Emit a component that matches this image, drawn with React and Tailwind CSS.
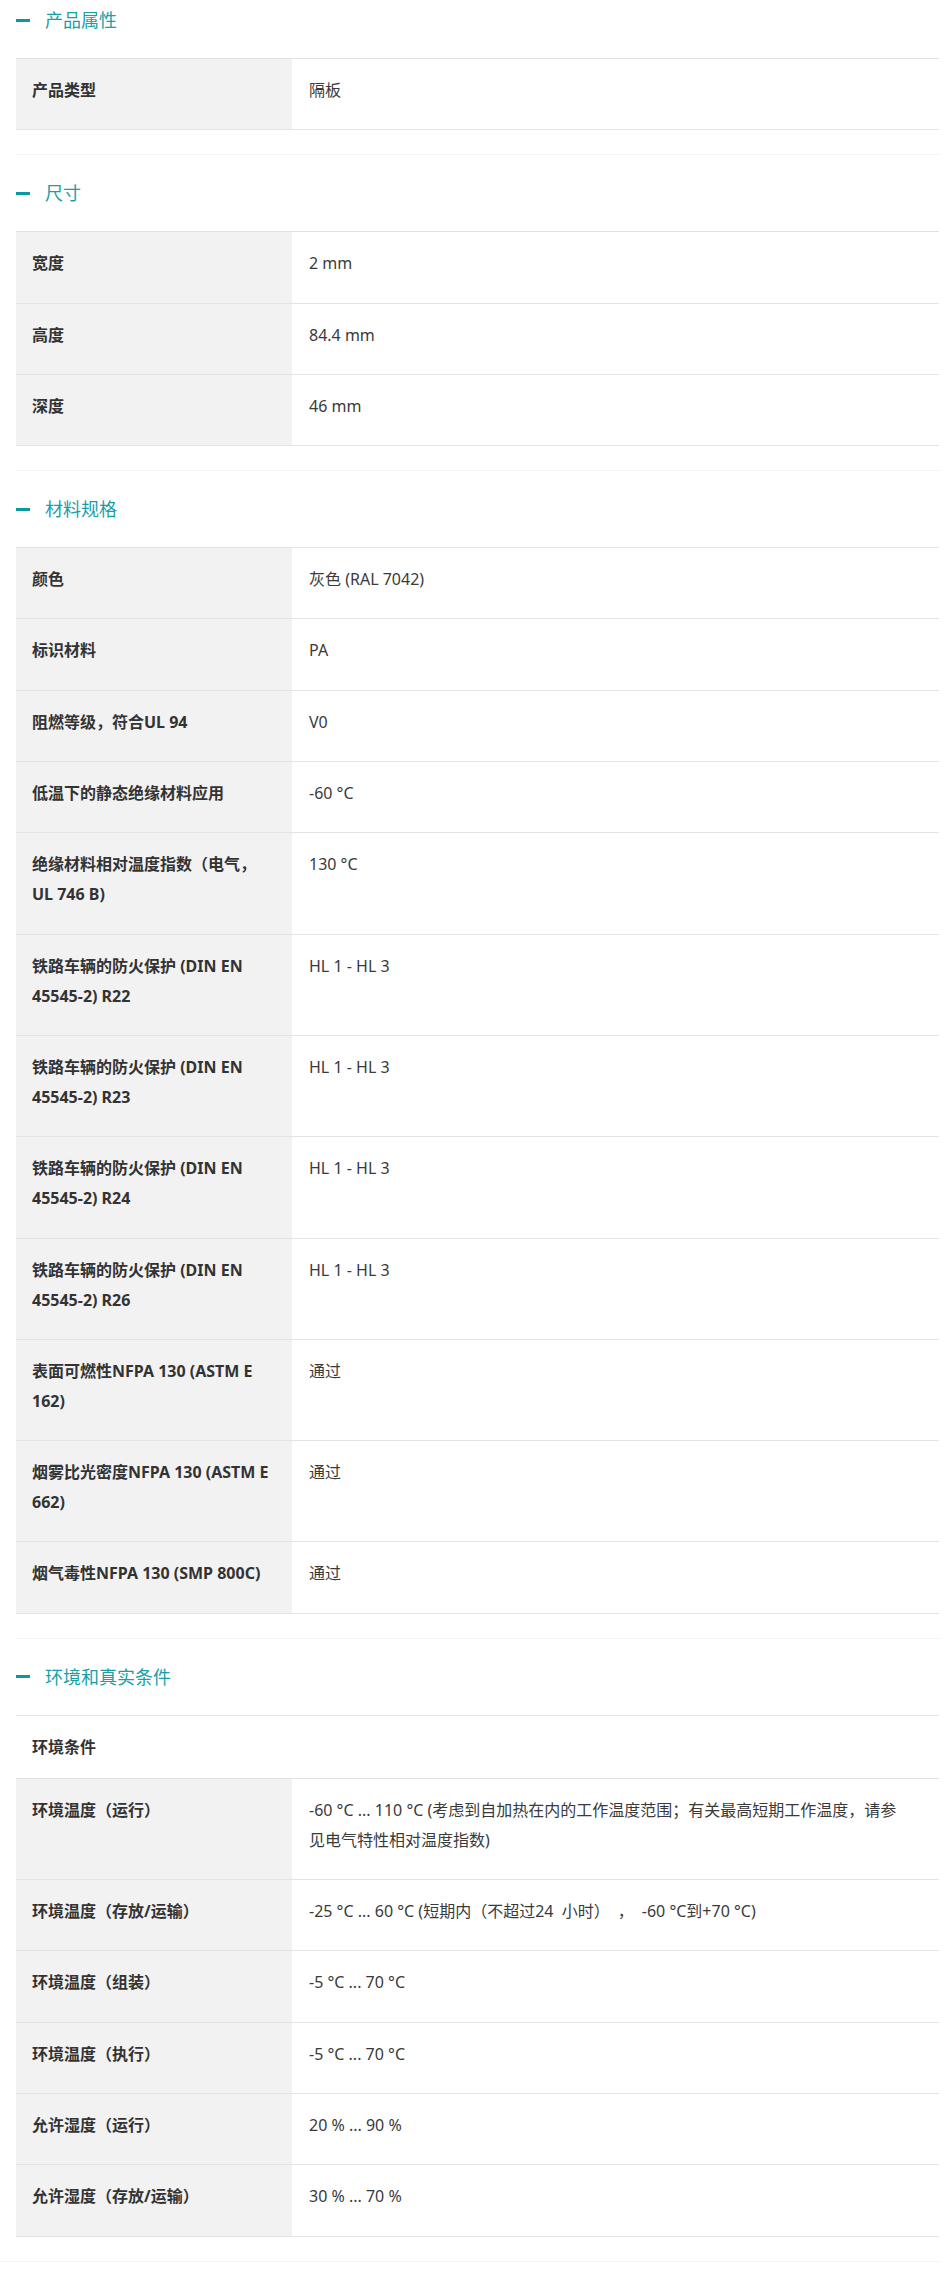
import React from "react";

const FONT = { fontFamily: '"Noto Sans", "Noto Sans CJK SC", sans-serif' };

const sections = [
  {
    title: "产品属性",
    first: true,
    rows: [[["产品类型"], ["隔板"]]],
  },
  {
    title: "尺寸",
    rows: [
      [["宽度"], ["2 mm"]],
      [["高度"], ["84.4 mm"]],
      [["深度"], ["46 mm"]],
    ],
  },
  {
    title: "材料规格",
    rows: [
      [["颜色"], ["灰色 (RAL 7042)"]],
      [["标识材料"], ["PA"]],
      [["阻燃等级，符合UL 94"], ["V0"]],
      [["低温下的静态绝缘材料应用"], ["-60 °C"]],
      [["绝缘材料相对温度指数（电气，", "UL 746 B)"], ["130 °C"]],
      [["铁路车辆的防火保护 (DIN EN", "45545-2) R22"], ["HL 1 - HL 3"]],
      [["铁路车辆的防火保护 (DIN EN", "45545-2) R23"], ["HL 1 - HL 3"]],
      [["铁路车辆的防火保护 (DIN EN", "45545-2) R24"], ["HL 1 - HL 3"]],
      [["铁路车辆的防火保护 (DIN EN", "45545-2) R26"], ["HL 1 - HL 3"]],
      [["表面可燃性NFPA 130 (ASTM E", "162)"], ["通过"]],
      [["烟雾比光密度NFPA 130 (ASTM E", "662)"], ["通过"]],
      [["烟气毒性NFPA 130 (SMP 800C)"], ["通过"]],
    ],
  },
  {
    title: "环境和真实条件",
    sub: "环境条件",
    rows: [
      [
        ["环境温度（运行）"],
        [
          "-60 °C ... 110 °C (考虑到自加热在内的工作温度范围；有关最高短期工作温度，请参",
          "见电气特性相对温度指数)",
        ],
      ],
      [["环境温度（存放/运输）"], ["-25 °C ... 60 °C (短期内（不超过24  小时）\u2002，\u2002-60 °C到+70 °C)"]],
      [["环境温度（组装）"], ["-5 °C ... 70 °C"]],
      [["环境温度（执行）"], ["-5 °C ... 70 °C"]],
      [["允许湿度（运行）"], ["20 % ... 90 %"]],
      [["允许湿度（存放/运输）"], ["30 % ... 70 %"]],
    ],
  },
];

function Lines({ lines }) {
  return lines.map((l, i) => (
    <React.Fragment key={i}>
      {i > 0 && <br />}
      <span className="whitespace-pre">{l}</span>
    </React.Fragment>
  ));
}

function Section({ s }) {
  return (
    <section className={s.first ? "" : "border-t border-[#f3f3f3]"}>
      <div
        className={`flex items-center ${s.first ? "pt-[6px]" : "pt-6"} pb-6`}
      >
        <span className="block w-[14px] h-[3px] bg-[#0c98a1]" />
        <h3 className="ml-[15px] text-[18px] leading-[28px] text-[#18a0a8] font-normal">
          {s.title}
        </h3>
      </div>
      <div className="border-t border-[#e2e2e2] mb-6">
        {s.sub && (
          <div className="border-b border-[#e2e2e2] px-4 pt-4 pb-4 font-bold text-[16px] leading-[30px] text-[#333]">
            {s.sub}
          </div>
        )}
        {s.rows.map((r, i) => (
          <div key={i} className="flex border-b border-[#e4e4e4]">
            <div className="w-[276px] shrink-0 bg-[#f2f2f2] px-4 pt-4 pb-[24.3px] font-bold text-[16px] leading-[30px] text-[#333]">
              <Lines lines={r[0]} />
            </div>
            <div className="flex-1 pl-[17px] pr-4 pt-4 pb-[24.3px] text-[16px] leading-[30px] text-[#3a3a3a]">
              <Lines lines={r[1]} />
            </div>
          </div>
        ))}
      </div>
    </section>
  );
}

export default function App() {
  return (
    <div className="bg-white w-[947px] h-[2278px] overflow-hidden" style={FONT}>
      <div className="pl-4 pr-2">
        {sections.map((s, i) => (
          <Section key={i} s={s} />
        ))}
      </div>
      <div className="w-[939px] border-t border-[#f3f3f3]" />
    </div>
  );
}
